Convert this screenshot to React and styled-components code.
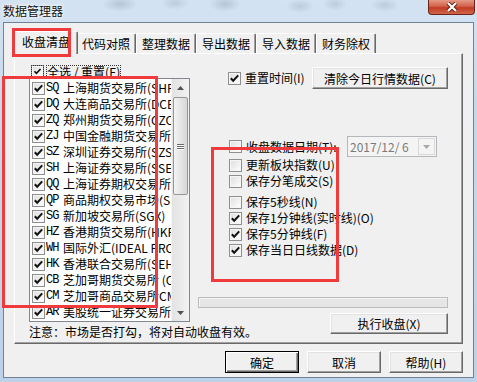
import React from 'react'
import styled, { createGlobalStyle } from 'styled-components'

const GlobalStyle = createGlobalStyle`
  html, body { margin: 0; padding: 0; }
  body {
    font-family: "Noto Sans CJK SC", "Liberation Sans", sans-serif;
    font-size: 12px;
    color: #000;
    background: #c9dbee;
  }
`

const exchanges = [
  ['SQ', '上海期货交易所(SHFE)'],
  ['DQ', '大连商品交易所(DCE)'],
  ['ZQ', '郑州期货交易所(CZCE)'],
  ['ZJ', '中国金融期货交易所(CFFEX)'],
  ['SZ', '深圳证券交易所(SZSE)'],
  ['SH', '上海证券交易所(SSE)'],
  ['QQ', '上海证券期权交易所(SSE)'],
  ['QP', '商品期权交易市场(SHFE)'],
  ['SG', '新加坡交易所(SGX)'],
  ['HZ', '香港期货交易所(HKFE)'],
  ['WH', '国际外汇(IDEAL PRO)'],
  ['HK', '香港联合交易所(SEHK)'],
  ['CB', '芝加哥期货交易所 (CBOT)'],
  ['CM', '芝加哥商品交易所CME'],
  ['AR', '美股统一证券交易所'],
]

const tabs = ['收盘清盘', '代码对照', '整理数据', '导出数据', '导入数据', '财务除权']

const options = [
  { label: '更新板块指数(U)', checked: false },
  { label: '保存分笔成交(S)', checked: false },
  { label: '保存5秒线(N)', checked: false, gap: true },
  { label: '保存1分钟线(实时线)(O)', checked: true },
  { label: '保存5分钟线(F)', checked: true },
  { label: '保存当日日线数据(D)', checked: true },
]

const Window = styled.div`
  position: relative;
  width: 477px;
  height: 382px;
  display: flex;
  flex-direction: column;
  overflow: hidden;
  background: linear-gradient(180deg, #d4e3f2 0%, #c5d8ec 30%, #bdd2e9 100%);
`

const TitleBar = styled.div`
  height: 22px;
  flex-shrink: 0;
  display: flex;
  align-items: flex-start;
  justify-content: space-between;
  padding: 0 2px 0 3px;
  background:
    radial-gradient(ellipse 18px 8px at 120px 4px, rgba(90, 110, 140, 0.25), transparent),
    radial-gradient(ellipse 14px 7px at 175px 3px, rgba(90, 110, 140, 0.2), transparent),
    radial-gradient(ellipse 16px 8px at 225px 4px, rgba(90, 110, 140, 0.25), transparent),
    radial-gradient(ellipse 14px 7px at 300px 6px, rgba(90, 110, 140, 0.2), transparent),
    radial-gradient(ellipse 12px 7px at 335px 4px, rgba(90, 110, 140, 0.2), transparent),
    radial-gradient(ellipse 14px 7px at 385px 5px, rgba(90, 110, 140, 0.2), transparent);
`

const Title = styled.div`
  line-height: 22px;
  font-size: 12px;
  color: #111;
  text-shadow: 0 0 5px #fff, 0 0 3px #fff;
`

const CloseButton = styled.div`
  width: 47px;
  height: 15px;
  box-sizing: border-box;
  border: 1px solid #6d2418;
  border-top: none;
  border-radius: 0 0 4px 4px;
  background: linear-gradient(180deg, #e59a86 0%, #d4604a 45%, #c23b22 55%, #d0664c 100%);
  display: flex;
  align-items: center;
  justify-content: center;
`

const Client = styled.div`
  flex: 1;
  margin: 0 3px 4px 3px;
  border: 1px solid #6f8296;
  background: #f0f0f0;
  padding: 8px 10px 0 10px;
  display: flex;
  flex-direction: column;
`

const TabStrip = styled.div`
  display: flex;
  align-items: flex-end;
  height: 22px;
  padding-left: 2px;
`

const Tab = styled.div`
  position: relative;
  box-sizing: border-box;
  width: ${p => (p.$active ? 64 : 60)}px;
  height: ${p => (p.$active ? 23 : 20)}px;
  margin: ${p => (p.$active ? '0 -2px -1px -2px' : '0')};
  z-index: ${p => (p.$active ? 2 : 1)};
  background: #f0f0f0;
  border-style: solid;
  border-width: 1px 1px 0 1px;
  border-color: #fff #696969 #f0f0f0 #fff;
  box-shadow: inset -1px 0 #a0a0a0;
  border-radius: 2px 2px 0 0;
  text-align: center;
  line-height: 19px;
  font-size: 12px;
`

const Panel = styled.div`
  box-sizing: border-box;
  height: 291px;
  border: 1px solid;
  border-color: #fff #696969 #696969 #fff;
  box-shadow: inset -1px -1px #a0a0a0;
  padding: 10px 14px 0 14px;
  display: flex;
  gap: 8px;
`

const LeftCol = styled.div`
  width: 161px;
  display: flex;
  flex-direction: column;
`

const RightCol = styled.div`
  flex: 1;
  display: flex;
  flex-direction: column;
`

const SelectAll = styled.div`
  height: 14px;
  display: flex;
  align-items: center;
  padding-left: 2px;
  gap: 2px;
  span {
    line-height: 13px;
    outline: 1px dotted #333;
    outline-offset: -1px;
    padding: 0 1px;
  }
`

const Box = styled.span`
  width: 13px;
  height: 13px;
  box-sizing: border-box;
  flex-shrink: 0;
  border: 1px solid #8e8f8f;
  background: linear-gradient(135deg, #dedede, #ffffff);
  box-shadow: inset 0 0 0 1px #f6f6f6;
  display: flex;
  align-items: center;
  justify-content: center;
`

const ListBox = styled.div`
  box-sizing: border-box;
  height: 244px;
  border: 1px solid #828790;
  background: #fff;
  display: flex;
`

const Rows = styled.div`
  flex: 1;
  overflow: hidden;
  padding-top: 1px;
`

const Row = styled.div`
  height: 16px;
  display: flex;
  align-items: center;
  padding-left: 2px;
  white-space: nowrap;
`

const Code = styled.span`
  width: 17px;
  margin-left: 1px;
  font-family: "Liberation Mono", monospace;
  font-size: 12px;
  letter-spacing: -1px;
  flex-shrink: 0;
`

const Name = styled.span`
  font-size: 12px;
  line-height: 16px;
`

const ScrollBar = styled.div`
  width: 17px;
  flex-shrink: 0;
  display: flex;
  flex-direction: column;
  background: linear-gradient(90deg, #e3e3e3, #f2f2f2);
  border-left: 1px solid #f4f4f4;
`

const ArrowButton = styled.div`
  height: 17px;
  display: flex;
  align-items: center;
  justify-content: center;
`

const Thumb = styled.div`
  margin: 1px 1px 0 1px;
  height: 98px;
  box-sizing: border-box;
  border: 1px solid #979797;
  border-radius: 2px;
  background: linear-gradient(90deg, #f3f3f3 0%, #e6e6e6 50%, #d6d6d6 100%);
  display: flex;
  flex-direction: column;
  align-items: center;
  justify-content: center;
  gap: 1px;
  i {
    display: block;
    width: 7px;
    height: 1px;
    background: #6b6b6b;
    box-shadow: 0 1px #fff;
  }
`

const Spacer = styled.div`
  flex: 1;
`

const Note = styled.div`
  height: 20px;
  line-height: 20px;
  white-space: nowrap;
`

const OptionRow = styled.div`
  display: flex;
  align-items: center;
  gap: 4px;
  flex-shrink: 0;
  height: ${p => p.$h || 16}px;
  margin-top: ${p => p.$mt || 0}px;
  padding-left: ${p => p.$indent || 31}px;
  white-space: nowrap;
  span {
    line-height: 16px;
  }
`

const Button = styled.div`
  box-sizing: border-box;
  width: ${p => p.$w || 74}px;
  height: ${p => p.$h || 22}px;
  flex-shrink: 0;
  background: #f0f0f0;
  border: 1px solid;
  border-color: ${p => (p.$default ? '#000' : '#fff #696969 #696969 #fff')};
  box-shadow: ${p =>
    p.$default
      ? 'inset 1px 1px #fff, inset -1px -1px #696969, inset -2px -2px #a0a0a0'
      : 'inset -1px -1px #a0a0a0, inset 1px 1px #e3e3e3'};
  display: flex;
  align-items: center;
  justify-content: center;
  font-size: 12px;
  margin-left: ${p => (p.$push ? 'auto' : '0')};
  margin-top: ${p => p.$mt || 0}px;
  align-self: ${p => (p.$end ? 'flex-end' : 'auto')};
`

const Combo = styled.div`
  box-sizing: border-box;
  width: 90px;
  height: 21px;
  margin-left: auto;
  margin-right: 11px;
  border: 1px solid #b4b8bc;
  background: #f4f4f4;
  display: flex;
  align-items: center;
  padding-left: 2px;
  color: #7a7a7a;
  span {
    flex: 1;
  }
`

const ComboButton = styled.div`
  width: 17px;
  height: 17px;
  margin-right: 1px;
  box-sizing: border-box;
  border: 1px solid #d9d9d9;
  background: #f4f4f4;
  display: flex;
  align-items: center;
  justify-content: center;
`

const Progress = styled.div`
  box-sizing: border-box;
  height: 11px;
  flex-shrink: 0;
  margin-top: 39px;
  border: 1px solid #bcbcbc;
  background: #e6e6e6;
  box-shadow: inset 1px 1px #f4f4f4;
`

const ButtonRow = styled.div`
  display: flex;
  justify-content: flex-end;
  gap: 8px;
  margin-top: 7px;
`

const Mark = styled.div`
  position: absolute;
  box-sizing: border-box;
  border: 3px solid #f03a3c;
  pointer-events: none;
  z-index: 5;
  left: ${p => p.$x}px;
  top: ${p => p.$y}px;
  width: ${p => p.$w}px;
  height: ${p => p.$h}px;
`

const Check = ({ checked }) => (
  <Box>
    {checked && (
      <svg width="11" height="11" viewBox="0 0 11 11">
        <polyline points="1.8,5.2 4.2,7.8 9.2,2.4" fill="none" stroke="#111" strokeWidth="2" />
      </svg>
    )}
  </Box>
)

const Triangle = ({ down, color = '#505050' }) => (
  <svg width="7" height="4" viewBox="0 0 7 4">
    <polygon points={down ? '0,0 7,0 3.5,4' : '0,4 7,4 3.5,0'} fill={color} />
  </svg>
)

export default function App() {
  return (
    <>
      <GlobalStyle />
      <Window>
        <TitleBar>
          <Title>数据管理器</Title>
          <CloseButton>
            <svg width="12" height="10" viewBox="0 0 12 10">
              <path d="M2 1 L10 9 M10 1 L2 9" stroke="#5a2015" strokeWidth="4" />
              <path d="M2 1 L10 9 M10 1 L2 9" stroke="#fff" strokeWidth="2.2" />
            </svg>
          </CloseButton>
        </TitleBar>
        <Client>
          <TabStrip>
            {tabs.map((t, i) => (
              <Tab key={t} $active={i === 0}>{t}</Tab>
            ))}
          </TabStrip>
          <Panel>
            <LeftCol>
              <SelectAll>
                <Check checked />
                <span>全选 / 重置(E)</span>
              </SelectAll>
              <ListBox>
                <Rows>
                  {exchanges.map(([code, name]) => (
                    <Row key={code}>
                      <Check checked />
                      <Code>{code}</Code>
                      <Name>{name}</Name>
                    </Row>
                  ))}
                </Rows>
                <ScrollBar>
                  <ArrowButton><Triangle /></ArrowButton>
                  <Thumb><i /><i /><i /></Thumb>
                  <Spacer />
                  <ArrowButton><Triangle down /></ArrowButton>
                </ScrollBar>
              </ListBox>
              <Note>注意：市场是否打勾，将对自动收盘有效。</Note>
            </LeftCol>
            <RightCol>
              <OptionRow $h={22} $mt={3} $indent={30}>
                <Check checked />
                <span>重置时间(I)</span>
                <Button $w={136} $push>清除今日行情数据(C)</Button>
              </OptionRow>
              <OptionRow $h={21} $mt={47}>
                <Check />
                <span>收盘数据日期(T):</span>
                <Combo>
                  <span>2017/12/ 6</span>
                  <ComboButton><Triangle down color="#a8a8a8" /></ComboButton>
                </Combo>
              </OptionRow>
              {options.map(o => (
                <OptionRow key={o.label} $mt={o.gap ? 5 : 0}>
                  <Check checked={o.checked} />
                  <span>{o.label}</span>
                </OptionRow>
              ))}
              <Progress />
              <Button $w={118} $h={21} $mt={5} $end>执行收盘(X)</Button>
            </RightCol>
          </Panel>
          <ButtonRow>
            <Button $default>确定</Button>
            <Button>取消</Button>
            <Button>帮助(H)</Button>
          </ButtonRow>
        </Client>
        <Mark $x={12} $y={28} $w={59} $h={29} />
        <Mark $x={2} $y={76} $w={156} $h={232} />
        <Mark $x={211} $y={147} $w={128} $h={135} />
      </Window>
    </>
  )
}
